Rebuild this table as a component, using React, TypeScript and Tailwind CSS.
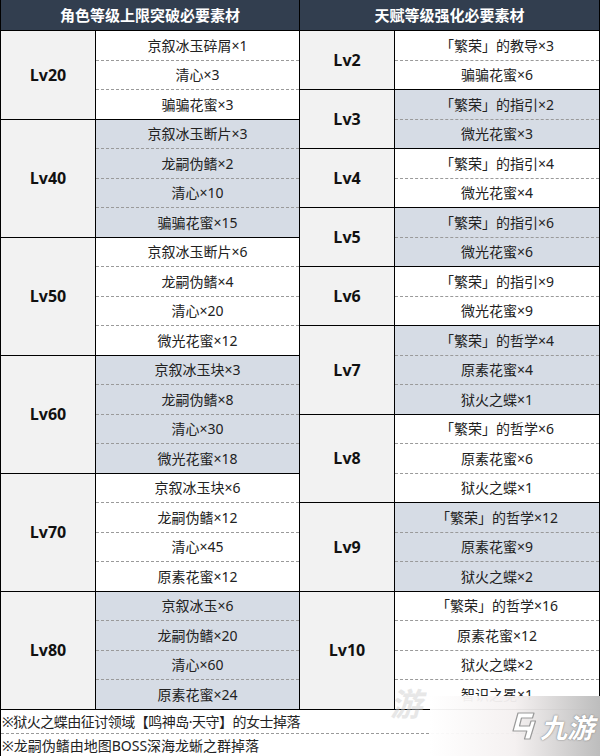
import React from 'react';

type Group = { lv: string; items: string[] };

const left: Group[] = [
  { lv: 'Lv20', items: ['京叙冰玉碎屑×1', '清心×3', '骗骗花蜜×3'] },
  { lv: 'Lv40', items: ['京叙冰玉断片×3', '龙嗣伪鳍×2', '清心×10', '骗骗花蜜×15'] },
  { lv: 'Lv50', items: ['京叙冰玉断片×6', '龙嗣伪鳍×4', '清心×20', '微光花蜜×12'] },
  { lv: 'Lv60', items: ['京叙冰玉块×3', '龙嗣伪鳍×8', '清心×30', '微光花蜜×18'] },
  { lv: 'Lv70', items: ['京叙冰玉块×6', '龙嗣伪鳍×12', '清心×45', '原素花蜜×12'] },
  { lv: 'Lv80', items: ['京叙冰玉×6', '龙嗣伪鳍×20', '清心×60', '原素花蜜×24'] },
];

const right: Group[] = [
  { lv: 'Lv2', items: ['「繁荣」的教导×3', '骗骗花蜜×6'] },
  { lv: 'Lv3', items: ['「繁荣」的指引×2', '微光花蜜×3'] },
  { lv: 'Lv4', items: ['「繁荣」的指引×4', '微光花蜜×4'] },
  { lv: 'Lv5', items: ['「繁荣」的指引×6', '微光花蜜×6'] },
  { lv: 'Lv6', items: ['「繁荣」的指引×9', '微光花蜜×9'] },
  { lv: 'Lv7', items: ['「繁荣」的哲学×4', '原素花蜜×4', '狱火之蝶×1'] },
  { lv: 'Lv8', items: ['「繁荣」的哲学×6', '原素花蜜×6', '狱火之蝶×1'] },
  { lv: 'Lv9', items: ['「繁荣」的哲学×12', '原素花蜜×9', '狱火之蝶×2'] },
  { lv: 'Lv10', items: ['「繁荣」的哲学×16', '原素花蜜×12', '狱火之蝶×2', '智识之冕×1'] },
];

const ROW = 29.5;

function Table({ title, groups, className }: { title: string; groups: Group[]; className: string }) {
  return (
    <div className={`w-[300px] flex flex-col ${className}`}>
      <div className="h-[31px] bg-[#323e4f] border-b border-black flex items-center justify-center text-white font-bold text-[15px]">
        {title}
      </div>
      {groups.map((g, gi) => (
        <div key={g.lv} className="flex border-b border-black" style={{ height: g.items.length * ROW }}>
          <div className="w-[95px] shrink-0 bg-[#f2f2f2] border-r border-black flex items-center justify-center font-bold text-[16px] text-[#111] font-['Open_Sans',sans-serif]">
            {g.lv}
          </div>
          <div className={`flex-1 flex flex-col ${gi % 2 === 1 ? 'bg-[#d6dce5]' : 'bg-white'}`}>
            {g.items.map((it, i) => (
              <div
                key={i}
                className={`flex-1 flex items-center justify-center text-[14px] text-[#222] ${i > 0 ? 'border-t border-dashed border-[#9a9a9a]' : ''}`}
              >
                {it}
              </div>
            ))}
          </div>
        </div>
      ))}
    </div>
  );
}

export default function App() {
  return (
    <div className="relative w-[600px] h-[756px] bg-white overflow-hidden font-['Noto_Sans','Noto_Sans_CJK_SC',sans-serif]">
      <div className="flex">
        <Table title="角色等级上限突破必要素材" groups={left} className="border-l border-r border-black" />
        <Table title="天赋等级强化必要素材" groups={right} className="border-r border-black" />
      </div>
      <div className="border-l border-r border-b border-black text-[14px] text-[#222]">
        <div className="h-[24px] flex items-center pl-[1px] border-b border-dashed border-[#9a9a9a] whitespace-nowrap tracking-[-0.5px]">
          ※狱火之蝶由征讨领域【鸣神岛·天守】的女士掉落
        </div>
        <div className="h-[23px] flex items-center pl-[1px] whitespace-nowrap">※龙嗣伪鳍由地图BOSS深海龙蜥之群掉落</div>
      </div>

      {/* watermarks */}
      <div className="absolute left-[390px] top-[688px] text-[32px] font-bold italic text-[#d0d0d0] opacity-50 leading-none">游</div>
      <div className="absolute left-[430px] top-[696px] w-[170px] h-[60px] bg-gradient-to-r from-white/95 via-[#f4f0f0]/95 to-[#bdbdbd] flex items-center pl-[80px] gap-[4px]">
        <svg width="26" height="30" viewBox="0 0 26 30">
          <path
            d="M8 2 H24 L22.5 7 H11.5 L9.5 15 H19.5 L21 10 H25.5 L20 28 H14.5 L16.8 20 H3 Z"
            fill="#fff"
            stroke="#9a9a9a"
            strokeWidth="1.2"
            strokeLinejoin="round"
          />
        </svg>
        <span className="text-[27px] font-bold italic text-white leading-none font-['Noto_Sans_CJK_SC',sans-serif] [text-shadow:0_0_2px_#8a8a8a,0_0_1px_#8a8a8a]">
          九游
        </span>
      </div>
    </div>
  );
}
